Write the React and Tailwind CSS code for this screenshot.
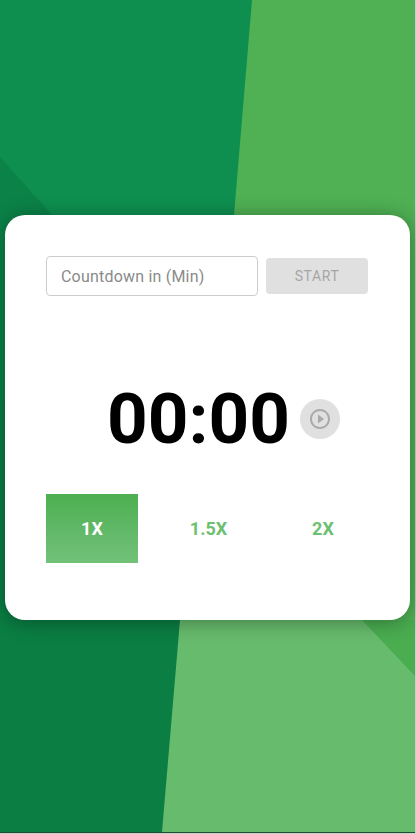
import React from "react";

function Background() {
  return (
    <svg className="absolute inset-0 w-full h-full" viewBox="0 0 415 832" preserveAspectRatio="none" aria-hidden="true">
      <rect x="0" y="0" width="415" height="400" fill="#0e8f50" />
      <rect x="0" y="400" width="415" height="432" fill="#0a7e43" />
      <polygon points="0,157 52,215 60,400 0,400" fill="#0b8248" />
      <polygon points="252,0 415,0 415,620 180,620 234,215" fill="#4fb054" />
      <polygon points="180,620 415,620 415,832 162,832" fill="#67bb6c" />
      <polygon points="362,620 415,620 415,676" fill="#4aad50" />
    </svg>
  );
}

function PlayIcon() {
  return (
    <svg width="24" height="24" viewBox="0 0 24 24" fill="#a9a9a9" aria-hidden="true">
      <path d="M10 16.5l6-4.5-6-4.5v9zM12 2C6.48 2 2 6.48 2 12s4.48 10 10 10 10-4.48 10-10S17.52 2 12 2zm0 18c-4.41 0-8-3.59-8-8s3.59-8 8-8 8 3.59 8 8-3.59 8-8 8z" />
    </svg>
  );
}

export default function App() {
  return (
    <div className="w-[416px] h-[834px] bg-[#c9cfca] overflow-hidden font-['Roboto',sans-serif]">
      <div className="relative w-[415px] h-[833px] pt-[215px] border-b border-[#1f4d30]">
        <Background />
        <div className="relative ml-[5px] w-[405px] h-[405px] bg-white rounded-[20px] shadow-[0_2px_20px_rgba(0,0,0,0.35)] pt-[41px] px-[41px]">
          <div className="flex items-center">
            <input
              placeholder="Countdown in (Min)"
              readOnly
              className="w-[212px] h-[40px] border border-[#cccccc] rounded-[4px] px-[14px] text-[16px] tracking-[0.2px] text-black placeholder:text-[#8a8a8a] outline-none"
            />
            <button className="ml-2 w-[102px] h-[36px] rounded-[4px] bg-[#e0e0e0] text-[14px] font-normal tracking-[0.6px] text-[#a6a6a6]">
              START
            </button>
          </div>
          <div className="flex items-center mt-[78px] ml-[61px]">
            <span className="text-[71px] font-bold leading-[90px] text-black">00:00</span>
            <button className="ml-[10px] w-[40px] h-[40px] rounded-full bg-[#e0e0e0] flex items-center justify-center">
              <PlayIcon />
            </button>
          </div>
          <div className="flex mt-[30px]">
            <button className="w-[92px] h-[69px] bg-gradient-to-b from-[#4caf50] to-[#72c17a] text-white font-bold text-[18px]">1X</button>
            <button className="ml-[24px] w-[93px] h-[69px] text-[#6cc072] font-bold text-[18px]">1.5X</button>
            <button className="ml-[22px] w-[92px] h-[69px] text-[#6cc072] font-bold text-[18px]">2X</button>
          </div>
        </div>
      </div>
    </div>
  );
}
